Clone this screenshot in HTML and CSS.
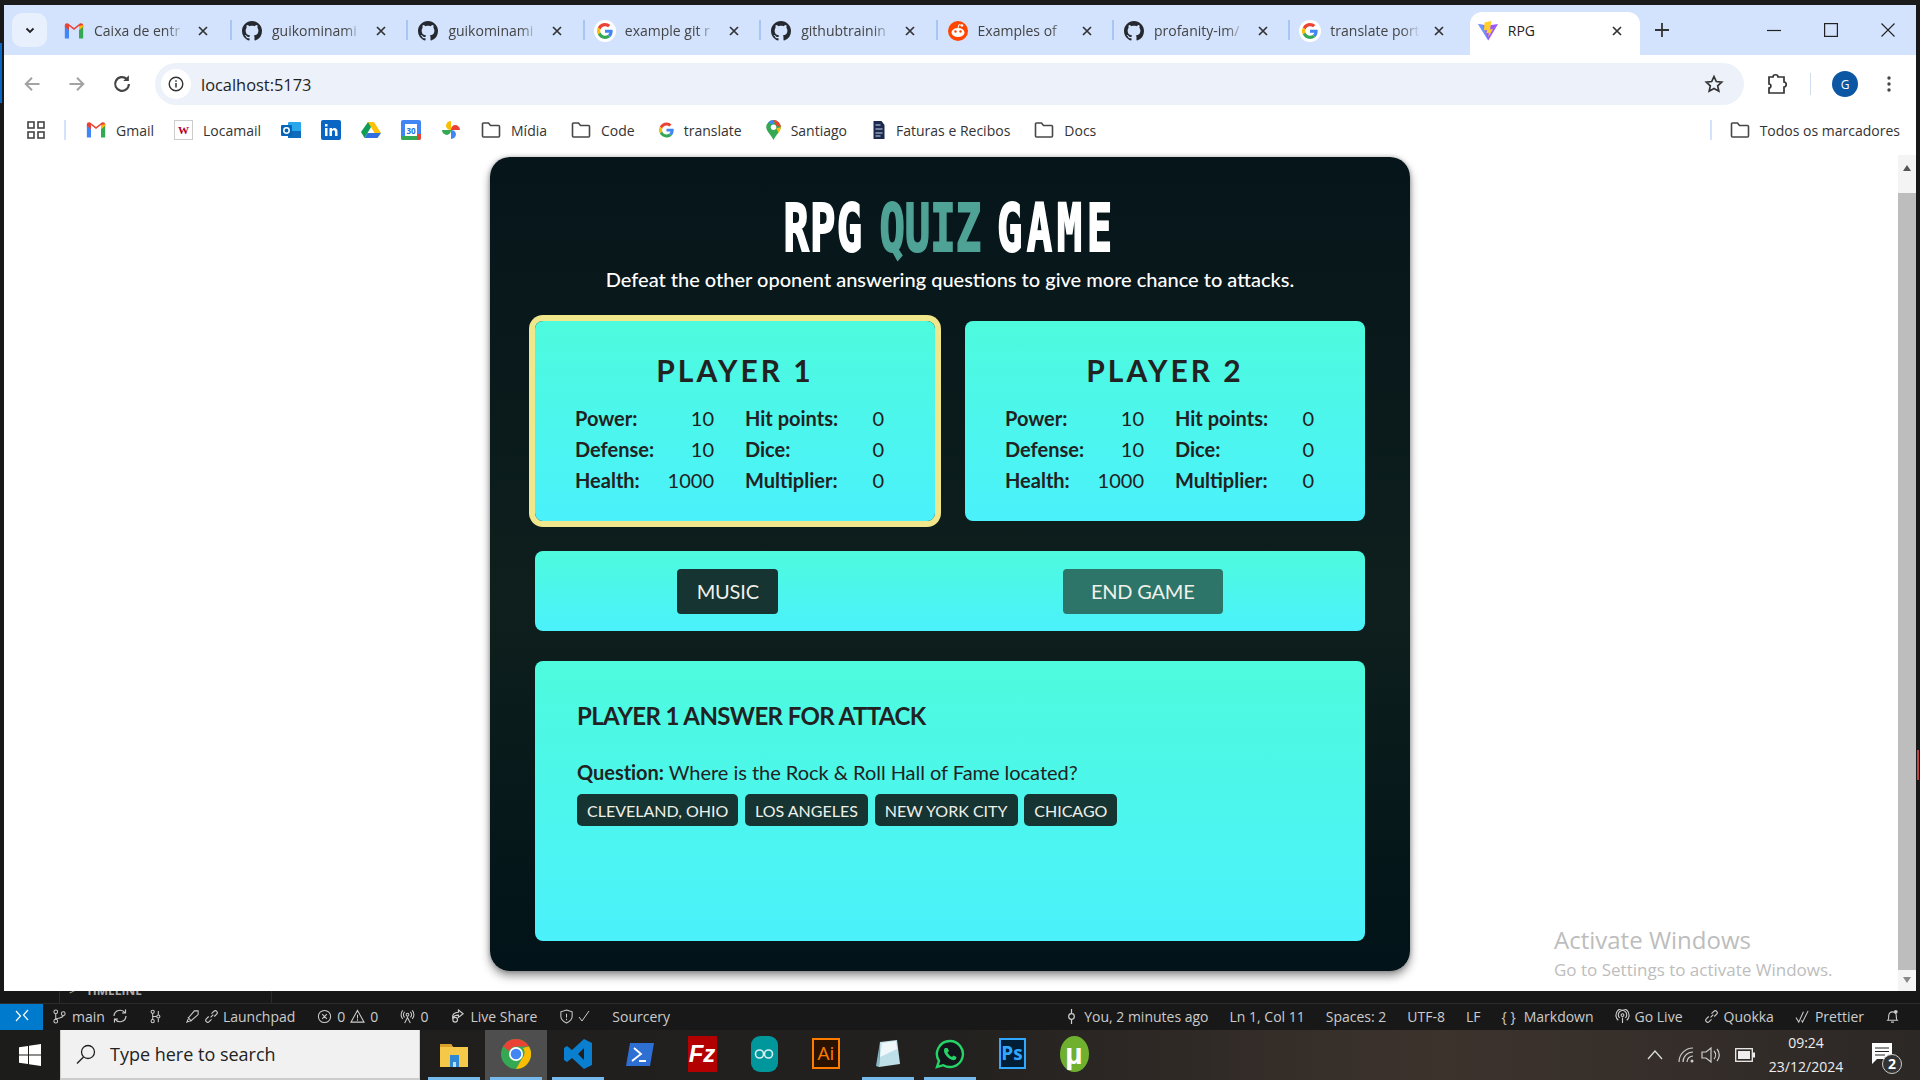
FILE: index.html
```html
<!DOCTYPE html>
<html lang="en">
<head>
<meta charset="utf-8">
<title>RPG</title>
<link rel="stylesheet" href="styles.css">
</head>
<body>
<svg class="defs" width="0" height="0" aria-hidden="true">
  <symbol id="gh" viewBox="0 0 16 16"><path fill="#24292f" d="M8 0C3.58 0 0 3.58 0 8c0 3.54 2.29 6.53 5.47 7.59.4.07.55-.17.55-.38 0-.19-.01-.82-.01-1.49-2.01.37-2.53-.49-2.69-.94-.09-.23-.48-.94-.82-1.13-.28-.15-.68-.52-.01-.53.63-.01 1.08.58 1.23.82.72 1.21 1.87.87 2.33.66.07-.52.28-.87.51-1.07-1.78-.2-3.64-.89-3.64-3.95 0-.87.31-1.59.82-2.15-.08-.2-.36-1.02.08-2.12 0 0 .67-.21 2.2.82.64-.18 1.32-.27 2-.27.68 0 1.36.09 2 .27 1.53-1.04 2.2-.82 2.2-.82.44 1.1.16 1.92.08 2.12.51.56.82 1.27.82 2.15 0 3.07-1.87 3.75-3.65 3.95.29.25.54.73.54 1.48 0 1.07-.01 1.93-.01 2.2 0 .21.15.46.55.38A8.013 8.013 0 0016 8c0-4.42-3.58-8-8-8z"/></symbol>
  <symbol id="g" viewBox="0 0 48 48"><path fill="#EA4335" d="M24 9.5c3.54 0 6.71 1.22 9.21 3.6l6.85-6.85C35.9 2.38 30.47 0 24 0 14.62 0 6.51 5.38 2.56 13.22l7.98 6.19C12.43 13.72 17.74 9.5 24 9.5z"/><path fill="#4285F4" d="M46.98 24.55c0-1.57-.15-3.09-.38-4.55H24v9.02h12.94c-.58 2.96-2.26 5.48-4.78 7.18l7.73 6c4.51-4.18 7.09-10.36 7.09-17.65z"/><path fill="#FBBC05" d="M10.53 28.59c-.48-1.45-.76-2.99-.76-4.59s.27-3.14.76-4.59l-7.98-6.19C.92 16.46 0 20.12 0 24c0 3.88.92 7.54 2.56 10.78l7.97-6.19z"/><path fill="#34A853" d="M24 48c6.48 0 11.93-2.13 15.89-5.81l-7.73-6c-2.15 1.45-4.92 2.3-8.16 2.3-6.26 0-11.57-4.22-13.47-9.91l-7.98 6.19C6.51 42.62 14.62 48 24 48z"/></symbol>
  <symbol id="gmail" viewBox="0 0 24 24"><path fill="#4285f4" d="M1 21h5V10L1 6z"/><path fill="#34a853" d="M18 21h5V6l-5 4z"/><path fill="#ea4335" d="M6 11 1 7V5c0-2 2.300-3 4-2l7 5.500L19 3c1.700-1 4 0 4 2v2l-5 4V6l-6 4.700L6 6z"/><path fill="#fbbc04" d="M18 6l5-1v2l-5 4z"/></symbol>
  <symbol id="close" viewBox="0 0 12 12"><path d="M2 2l8 8M10 2l-8 8" stroke="#333" stroke-width="1.700" fill="none"/></symbol>
  <symbol id="folder" viewBox="0 0 20 18"><path d="M1.500 15V3a1 1 0 0 1 1-1h5l2 2.500h8a1 1 0 0 1 1 1V15a1 1 0 0 1-1 1h-15a1 1 0 0 1-1-1z" fill="none" stroke="#474747" stroke-width="1.600"/></symbol>
  <symbol id="reddit" viewBox="0 0 20 20"><circle cx="10" cy="10" r="10" fill="#ff4500"/><ellipse cx="10" cy="11.500" rx="6.500" ry="4.500" fill="#fff"/><circle cx="7.500" cy="10.500" r="1.200" fill="#ff4500"/><circle cx="12.500" cy="10.500" r="1.200" fill="#ff4500"/><circle cx="14" cy="4.500" r="1.300" fill="#fff"/><path d="M10 7l1-3.500 3 1" stroke="#fff" fill="none"/></symbol>
  <symbol id="vite" viewBox="0 0 20 20"><path fill="#9a5cff" d="M0 3l10 1.600L20 3 10.300 19.500z"/><path fill="#41c9ff" d="M0 3l5 1 5 15.500z" opacity=".55"/><path fill="#ffd028" d="M13.500 0 6.500 1.500l-.5 8 3-.7-.6 3.500 2.600-.6-.8 4.500L15 8l-3 .5z"/></symbol>
</svg>

<div class="screen">
  <div class="top-edge"></div>
  <div class="browser-row">
    <div class="win-edge-left"><span class="edge-blue"></span></div>
    <main class="window">
      <div class="tabstrip">
        <button class="tab-list"><svg width="12" height="12" viewBox="0 0 12 12"><path d="M2.500 4.500 6 8l3.500-3.500" fill="none" stroke="#222" stroke-width="1.800"/></svg></button>
        <div class="tab tab-first"><svg class="fav"><use href="#gmail"/></svg><span class="tab-title">Caixa de entr</span><svg class="tab-x"><use href="#close"/></svg></div>
        <div class="tab sep"><svg class="fav"><use href="#gh"/></svg><span class="tab-title">guikominami</span><svg class="tab-x"><use href="#close"/></svg></div>
        <div class="tab sep"><svg class="fav"><use href="#gh"/></svg><span class="tab-title">guikominami</span><svg class="tab-x"><use href="#close"/></svg></div>
        <div class="tab sep"><span class="g-wrap"><svg class="g-in"><use href="#g"/></svg></span><span class="tab-title">example git r</span><svg class="tab-x"><use href="#close"/></svg></div>
        <div class="tab sep"><svg class="fav"><use href="#gh"/></svg><span class="tab-title">githubtrainin</span><svg class="tab-x"><use href="#close"/></svg></div>
        <div class="tab sep"><svg class="fav"><use href="#reddit"/></svg><span class="tab-title">Examples of</span><svg class="tab-x"><use href="#close"/></svg></div>
        <div class="tab sep"><svg class="fav"><use href="#gh"/></svg><span class="tab-title">profanity-im/</span><svg class="tab-x"><use href="#close"/></svg></div>
        <div class="tab sep"><span class="g-wrap"><svg class="g-in"><use href="#g"/></svg></span><span class="tab-title">translate port</span><svg class="tab-x"><use href="#close"/></svg></div>
        <div class="tab active"><svg class="fav"><use href="#vite"/></svg><span class="tab-title">RPG</span><svg class="tab-x"><use href="#close"/></svg></div>
        <svg class="new-tab" width="14" height="14" viewBox="0 0 14 14"><path d="M7 0v14M0 7h14" stroke="#333" stroke-width="1.800"/></svg>
        <div class="win-controls">
          <svg width="14" height="14" viewBox="0 0 14 14"><path d="M0 7.500h14" stroke="#222" stroke-width="1.200"/></svg>
          <svg width="14" height="14" viewBox="0 0 14 14"><rect x=".6" y=".6" width="12.800" height="12.800" fill="none" stroke="#222" stroke-width="1.200"/></svg>
          <svg width="14" height="14" viewBox="0 0 14 14"><path d="M.5.5l13 13M13.500.5l-13 13" stroke="#222" stroke-width="1.100"/></svg>
        </div>
      </div>

      <div class="toolbar">
        <svg class="tool-ic" viewBox="0 0 16 16"><path d="M14 8H3M8 3 3 8l5 5" fill="none" stroke="#a3a3a3" stroke-width="1.600"/></svg>
        <svg class="tool-ic" viewBox="0 0 16 16"><path d="M2 8h11M8 3l5 5-5 5" fill="none" stroke="#a3a3a3" stroke-width="1.600"/></svg>
        <svg class="tool-ic" viewBox="0 0 16 16"><path d="M13.500 8A5.500 5.500 0 1 1 11.800 4" fill="none" stroke="#444" stroke-width="1.700"/><path d="M13.500 1v4.500H9z" fill="#444"/></svg>
        <div class="omnibox">
          <span class="info-pill"><svg width="16" height="16" viewBox="0 0 16 16"><circle cx="8" cy="8" r="6.800" fill="none" stroke="#333" stroke-width="1.400"/><path d="M8 7v4.500M8 4.200v1.500" stroke="#333" stroke-width="1.500"/></svg></span>
          <span class="url">localhost:5173</span>
          <svg class="star" width="20" height="20" viewBox="0 0 20 20"><path d="M10 2.500l2.300 5 5.400.6-4 3.700 1.100 5.400L10 14.500l-4.800 2.700 1.100-5.400-4-3.700 5.400-.6z" fill="none" stroke="#333" stroke-width="1.700"/></svg>
        </div>
        <svg class="ext" width="20" height="22" viewBox="0 0 20 22"><path d="M2 4h4c0-3 5-3 5 0h6v5c3 0 3 5 0 5v6H2v-5c2.500 0 2.500-4 0-4z" fill="none" stroke="#333" stroke-width="1.700"/></svg>
        <span class="tool-sep"></span>
        <span class="avatar">G</span>
        <svg class="dots" width="4" height="16" viewBox="0 0 4 16"><circle cx="2" cy="2" r="1.700" fill="#444"/><circle cx="2" cy="8" r="1.700" fill="#444"/><circle cx="2" cy="14" r="1.700" fill="#444"/></svg>
      </div>

      <div class="bookmarks">
        <svg class="apps" width="18" height="18" viewBox="0 0 18 18"><g fill="none" stroke="#444" stroke-width="1.600"><rect x="1" y="1" width="6" height="6"/><rect x="11" y="1" width="6" height="6"/><rect x="1" y="11" width="6" height="6"/><rect x="11" y="11" width="6" height="6"/></g></svg>
        <span class="bm-sep"></span>
        <div class="bm"><svg class="bm-ic"><use href="#gmail"/></svg>Gmail</div>
        <div class="bm"><span class="loca">W</span>Locamail</div>
        <svg class="bm-ic" viewBox="0 0 20 20"><rect x="7" y="2" width="13" height="16" rx="1" fill="#28a8ea"/><path d="M7 11h13v7H7z" fill="#0f6cbd"/><rect y="5" width="11" height="11" rx="1" fill="#0364b8"/><circle cx="5.500" cy="10.500" r="2.700" fill="none" stroke="#fff" stroke-width="1.500"/></svg>
        <svg class="bm-ic" viewBox="0 0 20 20"><rect width="20" height="20" rx="2" fill="#0a66c2"/><path d="M4 8h2.500v8H4zM4 4h2.500v2.500H4zM8.500 8H11v1.200c1.800-2.200 5.500-1.600 5.500 2.300V16H14v-4c0-2.200-3-2.200-3 0v4H8.500z" fill="#fff"/></svg>
        <svg class="bm-ic" viewBox="0 0 20 20"><path d="M7 2h6l-6.500 11L3.500 18 0 12z" fill="#0f9d58"/><path d="M7 2h6l7 11h-6.500z" fill="#ffc107"/><path d="M6.500 13H20l-3.500 5H3.500z" fill="#2f6fe0"/></svg>
        <svg class="bm-ic" viewBox="0 0 20 20"><rect width="20" height="20" rx="2" fill="#4285f4"/><rect x="4" y="4" width="12" height="12" fill="#fff"/><path d="M16 14h4v4a2 2 0 0 1-2 2h-2z" fill="#ea4335"/><path d="M0 16h16v4H2a2 2 0 0 1-2-2z" fill="#34a853"/><text x="10" y="13.500" class="cal-num">30</text></svg>
        <svg class="bm-ic" viewBox="0 0 20 20"><path d="M10 10V1a5 5 0 0 0-5 5 5 5 0 0 0 5 4z" fill="#fbbc04"/><path d="M10 10h9a5 5 0 0 0-5-5 5 5 0 0 0-4 5z" fill="#ea4335"/><path d="M10 10v9a5 5 0 0 0 5-5 5 5 0 0 0-5-4z" fill="#4285f4"/><path d="M10 10H1a5 5 0 0 0 5 5 5 5 0 0 0 4-5z" fill="#34a853"/></svg>
        <div class="bm"><svg class="bm-ic"><use href="#folder"/></svg>Mídia</div>
        <div class="bm bm-wide"><svg class="bm-ic"><use href="#folder"/></svg>Code</div>
        <div class="bm bm-wide"><svg class="bm-g"><use href="#g"/></svg>translate</div>
        <div class="bm bm-wide"><svg class="bm-g" viewBox="0 0 16 22"><path d="M8 22C5 16 0 12 0 8a8 8 0 0 1 16 0c0 4-5 8-8 14z" fill="#34a853"/><path d="M2 3a8 8 0 0 1 6-3v5z" fill="#4285f4"/><path d="M8 0a8 8 0 0 1 8 8l-5-2z" fill="#ea4335"/><path d="M16 8c0 2-1 4-2.500 6L11 9z" fill="#fbbc04"/><circle cx="8" cy="8" r="3" fill="#fff"/></svg>Santiago</div>
        <div class="bm bm-wide"><svg class="bm-g" viewBox="0 0 14 20"><path d="M2 1h8l3 4v14H2z" fill="#1d2a50"/><path d="M4 5h5M4 9h7M4 13h7M4 16h5" stroke="#cdd6e6" stroke-width="1.200"/></svg>Faturas e Recibos</div>
        <div class="bm bm-wide"><svg class="bm-ic"><use href="#folder"/></svg>Docs</div>
        <span class="bm-sep bm-sep-right"></span>
        <div class="bm"><svg class="bm-ic"><use href="#folder"/></svg>Todos os marcadores</div>
      </div>

      <div class="viewport">
        <div class="page">
          <section class="game">
            <h1 class="title"><span class="title-rpg">RPG</span> <span class="title-accent">QUIZ</span> <span class="title-game">GAME</span></h1>
            <p class="subtitle">Defeat the other oponent answering questions to give more chance to attacks.</p>
            <div class="players">
              <article class="panel player player-active">
                <h2 class="player-name">PLAYER 1</h2>
                <div class="stats">
                  <div class="stat"><b>Power:</b><span>10</span></div>
                  <div class="stat"><b>Hit points:</b><span>0</span></div>
                  <div class="stat"><b>Defense:</b><span>10</span></div>
                  <div class="stat"><b>Dice:</b><span>0</span></div>
                  <div class="stat"><b>Health:</b><span>1000</span></div>
                  <div class="stat"><b>Multiplier:</b><span>0</span></div>
                </div>
              </article>
              <article class="panel player">
                <h2 class="player-name">PLAYER 2</h2>
                <div class="stats">
                  <div class="stat"><b>Power:</b><span>10</span></div>
                  <div class="stat"><b>Hit points:</b><span>0</span></div>
                  <div class="stat"><b>Defense:</b><span>10</span></div>
                  <div class="stat"><b>Dice:</b><span>0</span></div>
                  <div class="stat"><b>Health:</b><span>1000</span></div>
                  <div class="stat"><b>Multiplier:</b><span>0</span></div>
                </div>
              </article>
            </div>
            <div class="panel controls">
              <button class="ctl-btn">MUSIC</button>
              <button class="ctl-btn ctl-end">END GAME</button>
            </div>
            <div class="panel quiz">
              <h3 class="quiz-head">PLAYER 1 ANSWER FOR ATTACK</h3>
              <p class="quiz-q"><b>Question:</b> Where is the Rock &amp; Roll Hall of Fame located?</p>
              <div class="answers">
                <button class="answer">CLEVELAND, OHIO</button>
                <button class="answer">LOS ANGELES</button>
                <button class="answer">NEW YORK CITY</button>
                <button class="answer">CHICAGO</button>
              </div>
            </div>
          </section>
        </div>
        <div class="scrollbar">
          <span class="sb-arrow"></span>
          <span class="sb-thumb"></span>
          <span class="sb-arrow sb-down"></span>
        </div>
        <div class="activate">
          <div class="act-1">Activate Windows</div>
          <div class="act-2">Go to Settings to activate Windows.</div>
        </div>
      </div>
    </main>
    <div class="win-edge-right"><span class="edge-red"></span></div>
  </div>

  <div class="ide-strip"><div class="timeline"><span class="tl-chev">&gt;</span><b>TIMELINE</b></div></div>

  <footer class="statusbar">
    <span class="remote"><svg width="16" height="16" viewBox="0 0 16 16"><path d="M2 3l4.500 5L2 13M14 2 9.500 7l4.500 5" fill="none" stroke="#fff" stroke-width="1.200"/></svg></span>
    <div class="st-left">
      <div class="st-branch">
        <span class="st"><svg class="st-ic" viewBox="0 0 16 16"><g fill="none" stroke="#ccc" stroke-width="1.100"><circle cx="4" cy="3" r="2"/><circle cx="4" cy="13" r="2"/><circle cx="12" cy="5" r="2"/><path d="M4 5v6M12 7c0 3-6 2-8 4"/></g></svg>main</span>
        <svg class="st-ic st-big" viewBox="0 0 16 16"><path d="M2 8a6 6 0 0 1 11-3M14 8a6 6 0 0 1-11 3M13.500 1.500V5H10M2.500 14.500V11H6" fill="none" stroke="#ccc" stroke-width="1.200"/></svg>
      </div>
      <svg class="st-ic" viewBox="0 0 16 16"><g fill="none" stroke="#ccc" stroke-width="1.100"><circle cx="5" cy="3" r="1.700"/><circle cx="5" cy="13" r="1.700"/><circle cx="11" cy="8" r="1.700"/><path d="M5 5v6M5 8h4M11 2v4M11 10v4"/></g></svg>
      <span class="st st-rocket"><svg class="st-ic" viewBox="0 0 16 16"><path d="M2 14l2-5 6-7h4v4l-7 6zM3 9l4 4" fill="none" stroke="#ccc" stroke-width="1.100"/></svg><svg class="st-ic" viewBox="0 0 16 16"><path d="M7 9l3-3M5 8 2.500 10.500a2 2 0 0 0 3 3L8 11M8 5l2.500-2.500a2 2 0 0 1 3 3L11 8" fill="none" stroke="#ccc" stroke-width="1.200"/></svg>Launchpad</span>
      <span class="st"><svg class="st-ic" viewBox="0 0 16 16"><circle cx="8" cy="8" r="6.500" fill="none" stroke="#ccc" stroke-width="1.100"/><path d="M5.500 5.500l5 5M10.500 5.500l-5 5" stroke="#ccc" stroke-width="1.100"/></svg>0<svg class="st-ic" viewBox="0 0 16 16"><path d="M8 1.500 15 14H1zM8 6v4M8 11v1.500" fill="none" stroke="#ccc" stroke-width="1.100"/></svg>0</span>
      <span class="st"><svg class="st-ic" viewBox="0 0 16 16"><g fill="none" stroke="#ccc" stroke-width="1.100"><circle cx="8" cy="6" r="1.500"/><path d="M8 8v1L5 15M8 9l3 6M5 3a4 4 0 0 0 0 6M11 3a4 4 0 0 1 0 6M3 1.500a6.500 6.500 0 0 0 0 9M13 1.500a6.500 6.500 0 0 1 0 9"/></g></svg>0</span>
      <span class="st"><svg class="st-ic" viewBox="0 0 16 16"><path d="M9 1l5 4-5 4V6.500C5 6.500 3.500 8 3 10.500 2 6 4.500 3.500 9 3.500zM3 11.500a2.500 2.500 0 1 0 5 0 2.500 2.500 0 1 0-5 0" fill="none" stroke="#ccc" stroke-width="1.200"/></svg>Live Share</span>
      <span class="st st-tight"><svg class="st-ic" viewBox="0 0 16 16"><path d="M8 1l6 2v5c0 3.500-3 5.500-6 7-3-1.500-6-3.500-6-7V3zM8 5v4M8 10.500v1.500" fill="none" stroke="#ccc" stroke-width="1.100"/></svg><svg class="st-ic st-check" viewBox="0 0 12 12"><path d="M1 7l3 4 7-10" fill="none" stroke="#ccc" stroke-width="1"/></svg></span>
      <span class="st">Sourcery</span>
    </div>
    <div class="st-right">
      <span class="st"><svg class="st-ic" viewBox="0 0 16 16"><circle cx="8" cy="8" r="3" fill="none" stroke="#ccc" stroke-width="1.300"/><path d="M8 0v5M8 11v5" stroke="#ccc" stroke-width="1.300"/></svg>You, 2 minutes ago</span>
      <span class="st">Ln 1, Col 11</span>
      <span class="st">Spaces: 2</span>
      <span class="st">UTF-8</span>
      <span class="st">LF</span>
      <span class="st st-md"><span class="braces">{ }</span>Markdown</span>
      <span class="st"><svg class="st-ic" viewBox="0 0 16 16"><g fill="none" stroke="#ccc" stroke-width="1.200"><circle cx="8" cy="6.500" r="1.500"/><path d="M5 9.500a4.500 4.500 0 1 1 6 0M3.500 12a7 7 0 1 1 9 0M8 9v6"/></g></svg>Go Live</span>
      <span class="st"><svg class="st-ic" viewBox="0 0 16 16"><path d="M7 9l3-3M5 8 2.500 10.500a2 2 0 0 0 3 3L8 11M8 5l2.500-2.500a2 2 0 0 1 3 3L11 8" fill="none" stroke="#ccc" stroke-width="1.200"/></svg>Quokka</span>
      <span class="st"><svg class="st-ic" viewBox="0 0 16 16"><path d="M1 9l3 5 5-11M7 12l1 2 6-12" fill="none" stroke="#ccc" stroke-width="1.100"/></svg>Prettier</span>
      <svg class="st-ic" viewBox="0 0 16 16"><path d="M3 12c1-1 1-2 1-5a4 4 0 0 1 8 0c0 3 0 4 1 5zM6.500 14h3" fill="none" stroke="#ccc" stroke-width="1.200"/><circle cx="11.500" cy="3" r="2" fill="#ccc"/></svg>
    </div>
  </footer>

  <div class="taskbar">
    <div class="start"><svg width="22" height="22" viewBox="0 0 22 22"><path d="M0 3.200 9 2v8.500H0zM10 1.800 22 0v10.500H10zM0 11.500h9V20L0 18.800zM10 11.500h12V22l-12-1.800z" fill="#fff"/></svg></div>
    <div class="search"><svg width="22" height="22" viewBox="0 0 22 22"><circle cx="13" cy="9" r="6.500" fill="none" stroke="#222" stroke-width="1.300"/><path d="M8.500 14 2 20.500" stroke="#222" stroke-width="1.500"/></svg><span>Type here to search</span></div>
    <div class="apps-row">
      <div class="task on"><svg width="30" height="30" viewBox="0 0 30 30"><path d="M1 5h11l2 3h15v20H1z" fill="#f6c84a"/><path d="M1 5h11l2 3H1z" fill="#d9a12b"/><path d="M11 16h9v12h-9z" fill="#2f88d4"/><path d="M14 23h3v5h-3z" fill="#bfe0f7"/></svg></div>
      <div class="task on cur"><svg width="30" height="30" viewBox="0 0 30 30"><circle cx="15" cy="15" r="15" fill="#34a853"/><path d="M15 0a15 15 0 0 1 13 7.500H15a7.500 7.500 0 0 0-7 4.800L2.200 7.200A15 15 0 0 1 15 0z" fill="#ea4335"/><path d="M28 7.500A15 15 0 0 1 15 30l6.500-11.200A7.500 7.500 0 0 0 22 9z" fill="#fbbc04"/><circle cx="15" cy="15" r="7" fill="#fff"/><circle cx="15" cy="15" r="5.300" fill="#4285f4"/></svg></div>
      <div class="task on"><svg width="30" height="30" viewBox="0 0 30 30"><path d="M21 0l8 4v22l-8 4-12-11-5 4-3-2v-12l3-2 5 4zm0 9-6 6 6 6z" fill="#0a7fd0"/></svg></div>
      <div class="task"><svg width="30" height="30" viewBox="0 0 30 30"><path d="M5 4h24l-4 23H1z" fill="#2d6fd2"/><path d="M9 9l7 6-9 7M14 22h7" fill="none" stroke="#fff" stroke-width="1.800"/></svg></div>
      <div class="task"><span class="fz">Fz</span></div>
      <div class="task"><span class="ard"><svg width="20" height="12" viewBox="0 0 20 12"><g fill="none" stroke="#d7f0f0" stroke-width="1.600"><circle cx="5.500" cy="6" r="4"/><circle cx="14.500" cy="6" r="4"/></g></svg></span></div>
      <div class="task"><span class="ai">Ai</span></div>
      <div class="task on"><svg width="30" height="30" viewBox="0 0 30 30"><path d="M7 3l17-2 3 24-21 3z" fill="#bfdfe8"/><path d="M7 3 3 27l3 1z" fill="#8ab6c4"/><path d="M9 4l14-2 1 8-17 8z" fill="#eef8fb"/></svg></div>
      <div class="task on"><svg width="30" height="30" viewBox="0 0 30 30"><path d="M15 2a13 13 0 0 0-11 20L2 28l6.300-1.800A13 13 0 1 0 15 2z" fill="#12161a" stroke="#25d366" stroke-width="2.400"/><path d="M10 9c-2 2-1 6 3 9.500s7 3 8 1.500l.5-2-3-1.500-1.500 1.500c-2-.8-3.500-2.500-4.500-4.500l1.500-1.500L12.500 9z" fill="#25d366"/></svg></div>
      <div class="task"><span class="ps">Ps</span></div>
      <div class="task"><span class="ut">µ</span></div>
    </div>
    <div class="tray">
      <svg width="16" height="10" viewBox="0 0 16 10"><path d="M1 9l7-8 7 8" fill="none" stroke="#ddd" stroke-width="1.300"/></svg>
      <svg class="tray-wifi" width="18" height="18" viewBox="0 0 18 18"><g fill="none" stroke="#ccc" stroke-width="1.200"><path d="M2 16A14 14 0 0 1 16 2M6 16A10 10 0 0 1 16 6M10 16a6 6 0 0 1 6-6"/></g><circle cx="15" cy="15" r="1.500" fill="#ccc"/></svg>
      <svg width="20" height="18" viewBox="0 0 20 18"><path d="M1 6h4l5-4v14l-5-4H1zM13 5a6 6 0 0 1 0 8M16 3a9 9 0 0 1 0 12" fill="none" stroke="#ccc" stroke-width="1.200"/></svg>
      <svg class="batt" width="20" height="14" viewBox="0 0 20 14"><rect x=".7" y=".7" width="16.600" height="12.600" fill="none" stroke="#eee" stroke-width="1.300"/><rect x="3" y="3" width="12" height="8" fill="#eee"/><rect x="18" y="4.500" width="2" height="5" fill="#eee"/></svg>
    </div>
    <div class="clock"><span>09:24</span><span>23/12/2024</span></div>
    <div class="notif">
      <svg width="20" height="22" viewBox="0 0 20 22"><path d="M0 0h20v16H5l-5 5z" fill="#fff"/><path d="M3 5h14M3 8.500h14M3 12h10" stroke="#222" stroke-width="1.200"/></svg>
      <span class="notif-count">2</span>
    </div>
  </div>
</div>
</body>
</html>
```
FILE: styles.css
```css
* { box-sizing: border-box; }
html, body { margin: 0; padding: 0; height: 100%; overflow: hidden; }
body { font-family: "Open Sans", "Liberation Sans", sans-serif; background: #111; }
.defs { position: absolute; }
button { font-family: inherit; border: 0; }

.screen { width: 1920px; height: 1080px; display: flex; flex-direction: column; background: #171717; }
.top-edge { height: 5px; flex: none; background: #1b1b1b; }
.browser-row { height: 986px; flex: none; display: flex; }
.win-edge-left { width: 4px; flex: none; background: #181818; padding-top: 38px; }
.edge-blue { display: block; width: 2px; height: 60px; background: #0a66c2; }
.win-edge-right { width: 4px; flex: none; background: #181818; padding-top: 745px; }
.edge-red { display: block; width: 2px; height: 30px; background: #b44; margin-left: 1px; }
.window { flex: 1; min-width: 0; display: flex; flex-direction: column; background: #fff; border-top-right-radius: 8px; }

/* tabs */
.tabstrip { height: 50px; flex: none; background: #d3e3fd; display: flex; align-items: flex-end; padding-left: 8px; position: relative; }
.tab-list { width: 35px; height: 34px; align-self: flex-start; margin-top: 8px; background: #e9f0fd; border-radius: 10px; display: flex; align-items: center; justify-content: center; padding: 0; margin-right: 5px; }
.tab { width: 176.400px; height: 43px; flex: none; display: flex; align-items: center; padding: 0 0 6px 12px; position: relative; font-size: 14px; color: #444; }
.tab-first { width: 178px; padding-left: 12px; }
.tab.sep::before { content: ""; position: absolute; left: 0; top: 8px; height: 20px; width: 2px; background: #a9c6f2; }
.fav { width: 20px; height: 20px; flex: none; }
.g-wrap { width: 22px; height: 22px; flex: none; background: #fff; border-radius: 50%; display: flex; align-items: center; justify-content: center; margin: 0 -1px; }
.g-in { width: 16px; height: 16px; }
.tab-title { width: 90px; margin-left: 10px; white-space: nowrap; overflow: hidden; -webkit-mask-image: linear-gradient(90deg, #000 80%, transparent); mask-image: linear-gradient(90deg, #000 80%, transparent); }
.tab-x { width: 12px; height: 12px; flex: none; margin-left: 13px; }
.tab.active { width: 170px; height: 43px; background: #fff; border-radius: 12px 12px 0 0; color: #222; margin-left: 5px; padding-left: 8px; }
.tab.active .tab-x { margin-left: 0; }
.tab.active .tab-title { width: 103px; -webkit-mask-image: none; mask-image: none; margin-left: 10px; }
.new-tab { align-self: center; margin-left: 15px; }
.win-controls { margin-left: auto; display: flex; align-self: center; gap: 43px; padding-right: 21px; }

/* toolbar */
.toolbar { height: 50px; flex: none; background: #fff; display: flex; align-items: center; padding: 8px 0 0 18px; }
.tool-ic { width: 20px; height: 20px; flex: none; margin-right: 25px; }
.tool-ic:nth-child(3) { margin-right: 0; }
.omnibox { width: 1589px; height: 42px; margin-left: 23px; background: #ecf1fa; border-radius: 21px; display: flex; align-items: center; padding-left: 6px; }
.info-pill { width: 30px; height: 30px; border-radius: 50%; background: #fff; display: flex; align-items: center; justify-content: center; flex: none; }
.url { margin-left: 10px; font-size: 16.400px; color: #1f1f1f; }
.star { margin-left: auto; margin-right: 20px; }
.ext { margin-left: 23px; flex: none; }
.tool-sep { width: 1px; height: 22px; background: #cfdcf0; margin-left: 23px; flex: none; }
.avatar { width: 26px; height: 26px; border-radius: 50%; background: #0b57a4; color: #fff; font-size: 12px; display: flex; align-items: center; justify-content: center; margin-left: 21px; flex: none; }
.dots { margin-left: 29px; flex: none; }

/* bookmarks */
.bookmarks { height: 50px; flex: none; background: #fff; display: flex; align-items: center; padding: 0 16px 0 23px; gap: 20px; font-size: 14px; color: #333; }
.apps { flex: none; }
.bm-sep { width: 2px; height: 20px; background: #d3e3fd; flex: none; margin: 0 0 0 -1px; }
.bm-sep-right { margin-left: auto; margin-right: -2px; height: 20px; }
.bm { display: flex; align-items: center; gap: 10px; white-space: nowrap; }
.bm-wide { margin-left: 4px; }
.bm-ic { width: 20px; height: 20px; flex: none; }
.bm-g { width: 15px; height: 20px; flex: none; }
.loca { width: 19px; height: 20px; border: 1px solid #ccc; color: #b00032; font: 700 11px "Liberation Serif", serif; display: flex; align-items: center; justify-content: center; flex: none; }
.cal-num { font: 700 8px "Open Sans", sans-serif; fill: #1a73e8; text-anchor: middle; }

/* page */
.viewport { flex: 1; min-height: 0; display: flex; position: relative; background: #fff; }
.page { flex: 1; min-width: 0; display: flex; justify-content: center; padding: 2px 2px 0 0; }
.scrollbar { width: 18px; flex: none; background: #f4f4f4; display: flex; flex-direction: column; align-items: stretch; }
.sb-arrow { height: 38px; flex: none; position: relative; }
.sb-arrow::after { content: ""; position: absolute; left: 5px; top: 10px; border-left: 4px solid transparent; border-right: 4px solid transparent; border-bottom: 6px solid #555; }
.sb-down { height: 21px; }
.sb-down::after { top: 7px; border-bottom: 0; border-top: 6px solid #888; }
.sb-thumb { flex: 1; background: #bdbdbd; }
.activate { position: absolute; left: 1550px; top: 770px; color: #bdbdbd; white-space: nowrap; }
.act-1 { font-size: 24px; line-height: 30px; }
.act-2 { font-size: 17px; line-height: 30px; }

.game { width: 920px; height: 814px; flex: none; border-radius: 20px; padding: 40px 45px 30px; background: linear-gradient(180deg, #06151a 0%, #0e1f1d 55%, #021319 100%); box-shadow: 0 5px 10px rgba(0, 0, 0, .42), 0 0 4px rgba(0, 0, 0, .25); font-family: "Lato", sans-serif; }
.title { margin: 0; height: 60px; padding-top: 2px; text-align: center; font: 700 66px/60px "DejaVu Sans Mono", monospace; color: #fff; transform: scaleX(.64); white-space: nowrap; word-spacing: -15px; -webkit-text-stroke: 2px currentColor; }
.title-rpg { letter-spacing: 2px; }
.title-accent { color: #4fa296; }
.title-game { letter-spacing: 7px; }
.subtitle { margin: 9px 0 29px; line-height: 26px; font-size: 20px; font-weight: 500; color: #fff; text-align: center; }
.players { display: flex; gap: 30px; margin-bottom: 30px; }
.panel { background: linear-gradient(180deg, #4dfbdd 0%, #4bf1fb 100%); border-radius: 8px; color: #222; }
.player { width: 400px; height: 200px; padding: 30px 0 0 40px; }
.player-active { box-shadow: 0 0 0 6px #f0e68c; }
.player-name { margin: 0 40px 13px 0; font-size: 30px; line-height: 38px; letter-spacing: 3px; font-weight: 700; text-align: center; color: #222; }
.stats { display: grid; grid-template-columns: 139px 139px; column-gap: 31px; grid-auto-rows: 31px; font-size: 20px; align-items: center; }
.stat { display: flex; justify-content: space-between; }
.stat b { font-weight: 700; }
.controls { height: 80px; display: flex; align-items: center; justify-content: space-around; margin-bottom: 30px; }
.ctl-btn { height: 45px; width: 101px; background: #163432; color: #f0f0ea; font-size: 20px; letter-spacing: -.2px; border-radius: 4px; font-family: "Lato", sans-serif; padding: 0; }
.ctl-end { width: 160px; background: #2c7568; }
.quiz { height: 280px; padding: 40px 34px 0 42px; }
.quiz-head { margin: 0 0 28px; line-height: 30px; font-size: 24px; letter-spacing: -.6px; font-weight: 700; color: #222; }
.quiz-q { margin: 0 0 9px; line-height: 26px; font-size: 20px; letter-spacing: -.03px; }
.answers { display: flex; gap: 6.800px; }
.answer { height: 32px; padding: 0 10px; background: #163432; color: #f0f0ea; font-size: 16px; border-radius: 5px; font-family: "Lato", sans-serif; white-space: nowrap; }

/* ide */
.ide-strip { height: 12px; flex: none; background: #181818; overflow: hidden; margin-left: 59px; width: 213px; border-left: 1px solid #2b2b2b; border-right: 1px solid #2b2b2b; }
.timeline { font-size: 12px; line-height: 12px; color: #aaa; margin-top: -6px; padding-left: 9px; display: flex; gap: 10px; }
.statusbar { height: 27px; flex: none; display: flex; align-items: center; background: #181818; border-top: 1px solid #2b2b2b; padding-bottom: 2px; color: #ccc; font-size: 14px; }
.remote { width: 43px; height: 26px; flex: none; background: #007acc; display: flex; align-items: center; justify-content: center; margin-bottom: -2px; padding-bottom: 2px; }
.st-left { display: flex; align-items: center; gap: 22px; margin-left: 9px; }
.st-branch { display: flex; align-items: center; gap: 7px; }
.st { display: flex; align-items: center; gap: 5px; white-space: nowrap; }
.st-tight { gap: 4px; }
.st-rocket { gap: 4px; }
.st-ic { width: 15px; height: 15px; flex: none; }
.st-big { width: 16px; height: 16px; margin-right: -2px; }
.st-check { width: 12px; height: 12px; }
.st-right { margin-left: auto; display: flex; align-items: center; gap: 21px; padding-right: 20px; }
.st-md { gap: 8px; }
.braces { letter-spacing: 0; }

/* taskbar */
.taskbar { height: 50px; flex: none; display: flex; align-items: stretch; background: linear-gradient(90deg, #1c1c1a 0%, #23211f 50%, #3d332d 75%, #2c2826 100%); color: #eee; }
.start { width: 60px; flex: none; display: flex; align-items: center; justify-content: center; }
.search { width: 360px; flex: none; background: #f1f1f1; border-bottom: 2px solid #ccc; border-left: 1px solid #ccc; border-right: 1px solid #ccc; display: flex; align-items: center; gap: 13px; padding-left: 14px; font-size: 18px; color: #222; }
.apps-row { display: flex; margin-left: 3px; }
.task { width: 62px; flex: none; display: flex; align-items: center; justify-content: center; border-bottom: 3px solid transparent; background-clip: padding-box; position: relative; }
.task.on::after { content: ""; position: absolute; left: 5px; right: 5px; bottom: -3px; height: 3px; background: #76b9ed; }
.task.cur { background: #4e4e4e; }
.fz { width: 29px; height: 36px; background: #b30000; color: #fff; font: italic 700 24px/36px "Liberation Sans", sans-serif; text-align: center; }
.ard { width: 27px; height: 36px; border-radius: 9px; background: #00979c; display: flex; align-items: center; justify-content: center; }
.ai { width: 28px; height: 31px; background: #2a1200; border: 2px solid #ff7c00; color: #ff7c00; font: 400 19px/27px "Open Sans", sans-serif; text-align: center; }
.ps { width: 27px; height: 31px; background: #001e36; border: 2px solid #31a8ff; color: #31a8ff; font: 700 19px/27px "Open Sans", sans-serif; text-align: center; }
.ut { width: 29px; height: 36px; border-radius: 50%; background: #6fb02e; color: #fff; font: 700 30px/36px "Liberation Sans", sans-serif; text-align: center; }
.tray { margin-left: auto; display: flex; align-items: center; gap: 6px; }
.tray-wifi { margin-left: 8px; }
.batt { margin-left: 8px; }
.clock { width: 100px; margin-left: 1px; display: flex; flex-direction: column; align-items: center; justify-content: center; gap: 6px; font-size: 14px; line-height: 18px; color: #eee; }
.notif { width: 64px; flex: none; position: relative; display: flex; align-items: center; justify-content: center; padding: 0 12px 2px 0; }
.notif-count { position: absolute; left: 26px; top: 24px; width: 20px; height: 20px; border-radius: 50%; border: 1px solid #ccc; background: #333; color: #fff; font-size: 14px; font-weight: 700; line-height: 18px; text-align: center; }
```
